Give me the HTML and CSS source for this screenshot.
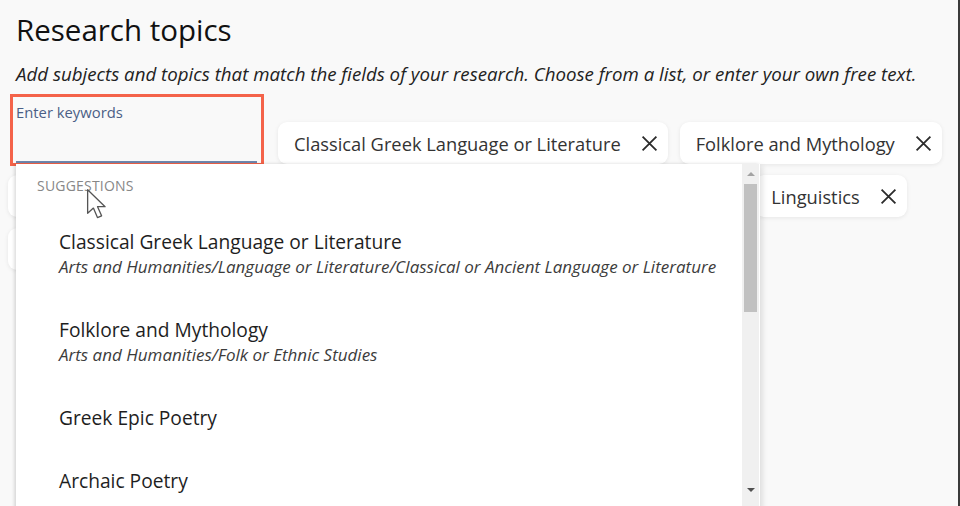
FILE: index.html
```html
<!DOCTYPE html>
<html lang="en">
<head>
  <meta charset="UTF-8">
  <title>Research topics</title>
  <link rel="stylesheet" href="styles.css">
</head>
<body>
  <div class="page">
    <h1>Research topics</h1>
    <p class="intro">Add subjects and topics that match the fields of your research. Choose from a list, or enter your own free text.</p>

    <div class="topics">
      <div class="keyword-field">
        <label for="kw">Enter keywords</label>
        <input id="kw" type="text">

        <div class="suggestions">
          <div class="suggestion-list">
            <div class="suggestion-head">Suggestions</div>
            <div class="suggestion">
              <div class="suggestion-title">Classical Greek Language or Literature</div>
              <div class="suggestion-path">Arts and Humanities/Language or Literature/Classical or Ancient Language or Literature</div>
            </div>
            <div class="suggestion">
              <div class="suggestion-title">Folklore and Mythology</div>
              <div class="suggestion-path">Arts and Humanities/Folk or Ethnic Studies</div>
            </div>
            <div class="suggestion">
              <div class="suggestion-title">Greek Epic Poetry</div>
            </div>
            <div class="suggestion">
              <div class="suggestion-title">Archaic Poetry</div>
            </div>
          </div>
          <div class="scrollbar">
            <span class="arrow up"></span>
            <div class="track"><div class="thumb"></div></div>
            <span class="arrow down"></span>
          </div>
          <svg class="pointer" width="24" height="33" viewBox="0 0 22 30">
            <path d="M1.5 1.5 L1.5 23 L6.8 18.3 L10.5 27 L14.3 25.4 L10.6 17 L17.5 17 Z" fill="#fff" stroke="#555" stroke-width="1.2" stroke-linejoin="round"/>
          </svg>
        </div>
      </div>

      <span class="chip">Classical Greek Language or Literature <button class="chip-x" aria-label="Remove"><svg viewBox="0 0 16 16"><path d="M1.5 1.5 L14.5 14.5 M14.5 1.5 L1.5 14.5"/></svg></button></span>
      <span class="chip">Folklore and Mythology <button class="chip-x" aria-label="Remove"><svg viewBox="0 0 16 16"><path d="M1.5 1.5 L14.5 14.5 M14.5 1.5 L1.5 14.5"/></svg></button></span>
      <span class="chip">Ancient Greek Literature and Philology <button class="chip-x" aria-label="Remove"><svg viewBox="0 0 16 16"><path d="M1.5 1.5 L14.5 14.5 M14.5 1.5 L1.5 14.5"/></svg></button></span>
      <span class="chip">Homeric and Hellenistic Studies <button class="chip-x" aria-label="Remove"><svg viewBox="0 0 16 16"><path d="M1.5 1.5 L14.5 14.5 M14.5 1.5 L1.5 14.5"/></svg></button></span>
      <span class="chip">Linguistics <button class="chip-x" aria-label="Remove"><svg viewBox="0 0 16 16"><path d="M1.5 1.5 L14.5 14.5 M14.5 1.5 L1.5 14.5"/></svg></button></span>
      <span class="chip">Greek Epic Poetry <button class="chip-x" aria-label="Remove"><svg viewBox="0 0 16 16"><path d="M1.5 1.5 L14.5 14.5 M14.5 1.5 L1.5 14.5"/></svg></button></span>
      <span class="chip">Archaic Poetry <button class="chip-x" aria-label="Remove"><svg viewBox="0 0 16 16"><path d="M1.5 1.5 L14.5 14.5 M14.5 1.5 L1.5 14.5"/></svg></button></span>
    </div>
  </div>
</body>
</html>
```

FILE: styles.css
```css
html, body {
  margin: 0;
  height: 100%;
  overflow: hidden;
  background: #f9f9f9;
}

body {
  font-family: "Open Sans", "Noto Sans", sans-serif;
  color: #222;
}

.page {
  height: 100%;
  padding: 0 6px 0 8px;
  border-right: 2px solid #3a3a3a;
}

h1 {
  margin: 0;
  padding: 10px 0 0 8px;
  font-size: 29.5px;
  font-weight: 400;
  line-height: 40px;
  color: #111;
}

.intro {
  margin: 12px 0 0 8px;
  font-size: 18.7px;
  font-style: italic;
  line-height: 24px;
  color: #222;
}

.topics {
  display: flex;
  flex-wrap: wrap;
  align-items: flex-end;
  column-gap: 12px;
  row-gap: 11px;
  margin-top: 8px;
}

.keyword-field {
  position: relative;
  width: 248px;
  height: 66px;
  margin: 0 2px -2px 2px;
  border: 3px solid #f4634a;
  display: flex;
  flex-direction: column;
}

.keyword-field label {
  padding: 6px 0 0 3px;
  font-size: 14.8px;
  line-height: 18px;
  color: #4b5f86;
}

.keyword-field input {
  margin: auto 4px 0 3px;
  height: 28px;
  border: 0;
  border-bottom: 2px solid #6f87ad;
  background: transparent;
  outline: none;
}

.chip {
  display: inline-flex;
  align-items: center;
  height: 42px;
  padding: 0 10px 0 16px;
  gap: 20px;
  background: #fff;
  border-radius: 9px;
  box-shadow: 0 1px 4px rgba(0, 0, 0, 0.08);
  font-size: 18.3px;
  color: #333;
  white-space: nowrap;
}

.chip-x {
  display: flex;
  padding: 0;
  border: 0;
  background: none;
}

.chip-x svg {
  width: 17px;
  height: 17px;
  fill: none;
  stroke: #2b2b2b;
  stroke-width: 1.7;
}

/* dropdown lying over the chips */
.suggestions {
  position: absolute;
  top: 67px;
  left: 3px;
  z-index: 2;
  width: 744px;
  height: 360px;
  display: flex;
  background: #fff;
  box-shadow: -2px 0 3px rgba(0, 0, 0, 0.12), 3px 2px 5px rgba(0, 0, 0, 0.1);
}

.suggestion-list {
  flex: 1;
  padding-top: 12px;
}

.suggestion-head {
  padding-left: 21px;
  font-size: 14px;
  line-height: 20px;
  letter-spacing: 0.2px;
  text-transform: uppercase;
  color: #878787;
}

.suggestion {
  padding: 19px 0 19px 43px;
}

.suggestion-head + .suggestion {
  padding-top: 33px;
}

.suggestion-title {
  font-size: 19.2px;
  font-weight: 500;
  line-height: 25px;
  color: #1e1e1e;
}

.suggestion-path {
  margin-top: 1px;
  font-size: 17px;
  font-style: italic;
  line-height: 24px;
  color: #3c3c3c;
}

.scrollbar {
  width: 17px;
  margin-right: 1px;
  display: flex;
  flex-direction: column;
  align-items: center;
  background: #f0f0f0;
}

.track {
  flex: 1;
  width: 100%;
}

.thumb {
  width: 13px;
  height: 128px;
  margin: 0 auto;
  background: #c1c1c1;
}

.arrow {
  width: 0;
  height: 0;
  margin: 8px 0;
  border-left: 4px solid transparent;
  border-right: 4px solid transparent;
}

.arrow.up {
  border-bottom: 4px solid #a3a3a3;
}

.arrow.down {
  margin-bottom: 32px;
  border-top: 4px solid #505050;
}

.pointer {
  position: absolute;
  top: 24px;
  left: 70px;
}
```
